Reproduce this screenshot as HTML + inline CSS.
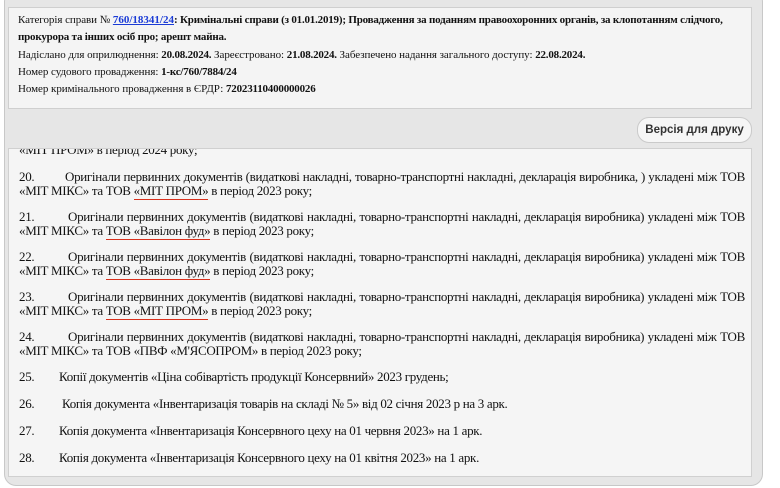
<!DOCTYPE html>
<html><head><meta charset="utf-8"><style>
*{margin:0;padding:0;box-sizing:border-box}
body{width:780px;height:488px;background:#fff;overflow:hidden;font-family:"Liberation Serif",serif;color:#111;position:relative}
.frame{position:absolute;left:4px;top:-10px;width:759px;height:496px;background:#e6e6e6;border:1px solid #c8c8c8;border-radius:12px}
.info{position:absolute;left:8px;top:7px;width:744px;height:102px;background:#f4f4f4;border:1px solid #cfcfcf;font-size:11px;padding:4px 9px;line-height:17.3px;letter-spacing:-0.05px}
.info b{letter-spacing:-0.2px}
.info a{color:#1a3bd6;font-weight:bold;letter-spacing:0}
.btn{position:absolute;left:637px;top:117px;width:115px;height:26px;border:1px solid #cacaca;border-radius:12px;background:#f6f6f6;font-family:"Liberation Sans",sans-serif;font-weight:bold;font-size:11.5px;color:#333;text-align:center;line-height:24px}
.content{position:absolute;left:8px;top:148px;width:744px;height:329px;background:#f5f5f5;border:1px solid #d0d0d0;overflow:hidden;font-size:13px;line-height:14.2px;letter-spacing:-0.31px}
.p{position:absolute;left:10px;width:726px;text-align:justify;text-align-last:left}
.n{display:inline-block}
u{text-decoration:none;border-bottom:1.5px solid #d8301c;padding-bottom:1px}
</style></head><body>
<div class="frame"></div>
<div class="info">
Категорія справи № <a href="#">760/18341/24</a><b>: Кримінальні справи (з 01.01.2019); Провадження за поданням правоохоронних органів, за клопотанням слідчого, прокурора та інших осіб про; арешт майна.</b><br>
Надіслано для оприлюднення: <b>20.08.2024.</b> Зареєстровано: <b>21.08.2024.</b> Забезпечено надання загального доступу: <b>22.08.2024.</b><br>
Номер судового провадження: <b>1-кс/760/7884/24</b><br>
Номер кримінального провадження в ЄРДР: <b>72023110400000026</b>
</div>
<div class="btn">Версія для друку</div>
<div class="content">
<div class="p" style="top:-6px">«МІТ ПРОМ» в період 2024 року;</div>
<div class="p" style="top:21px"><span class="n" style="width:46px">20.</span>Оригінали первинних документів (видаткові накладні, товарно-транспортні накладні, декларація виробника, ) укладені між ТОВ «МІТ МІКС» та ТОВ <u>«МІТ ПРОМ»</u> в період 2023 року;</div>
<div class="p" style="top:61px"><span class="n" style="width:49px">21.</span>Оригінали первинних документів (видаткові накладні, товарно-транспортні накладні, декларація виробника) укладені між ТОВ «МІТ МІКС» та <u>ТОВ «Вавілон фуд»</u> в період 2023 року;</div>
<div class="p" style="top:101px"><span class="n" style="width:49px">22.</span>Оригінали первинних документів (видаткові накладні, товарно-транспортні накладні, декларація виробника) укладені між ТОВ «МІТ МІКС» та <u>ТОВ «Вавілон фуд»</u> в період 2023 року;</div>
<div class="p" style="top:141px"><span class="n" style="width:49px">23.</span>Оригінали первинних документів (видаткові накладні, товарно-транспортні накладні, декларація виробника) укладені між ТОВ «МІТ МІКС» та <u>ТОВ «МІТ ПРОМ»</u> в період 2023 року;</div>
<div class="p" style="top:181px"><span class="n" style="width:49px">24.</span>Оригінали первинних документів (видаткові накладні, товарно-транспортні накладні, декларація виробника) укладені між ТОВ «МІТ МІКС» та ТОВ «ПВФ «М'ЯСОПРОМ» в період 2023 року;</div>
<div class="p" style="top:221px"><span class="n" style="width:40px">25.</span>Копії документів «Ціна собівартість продукції Консервний» 2023 грудень;</div>
<div class="p" style="top:248px"><span class="n" style="width:43px">26.</span>Копія документа «Інвентаризація товарів на складі № 5» від 02 січня 2023 р на 3 арк.</div>
<div class="p" style="top:275px"><span class="n" style="width:40px">27.</span>Копія документа «Інвентаризація Консервного цеху на 01 червня 2023» на 1 арк.</div>
<div class="p" style="top:302px"><span class="n" style="width:40px">28.</span>Копія документа «Інвентаризація Консервного цеху на 01 квітня 2023» на 1 арк.</div>
</div>
</body></html>
